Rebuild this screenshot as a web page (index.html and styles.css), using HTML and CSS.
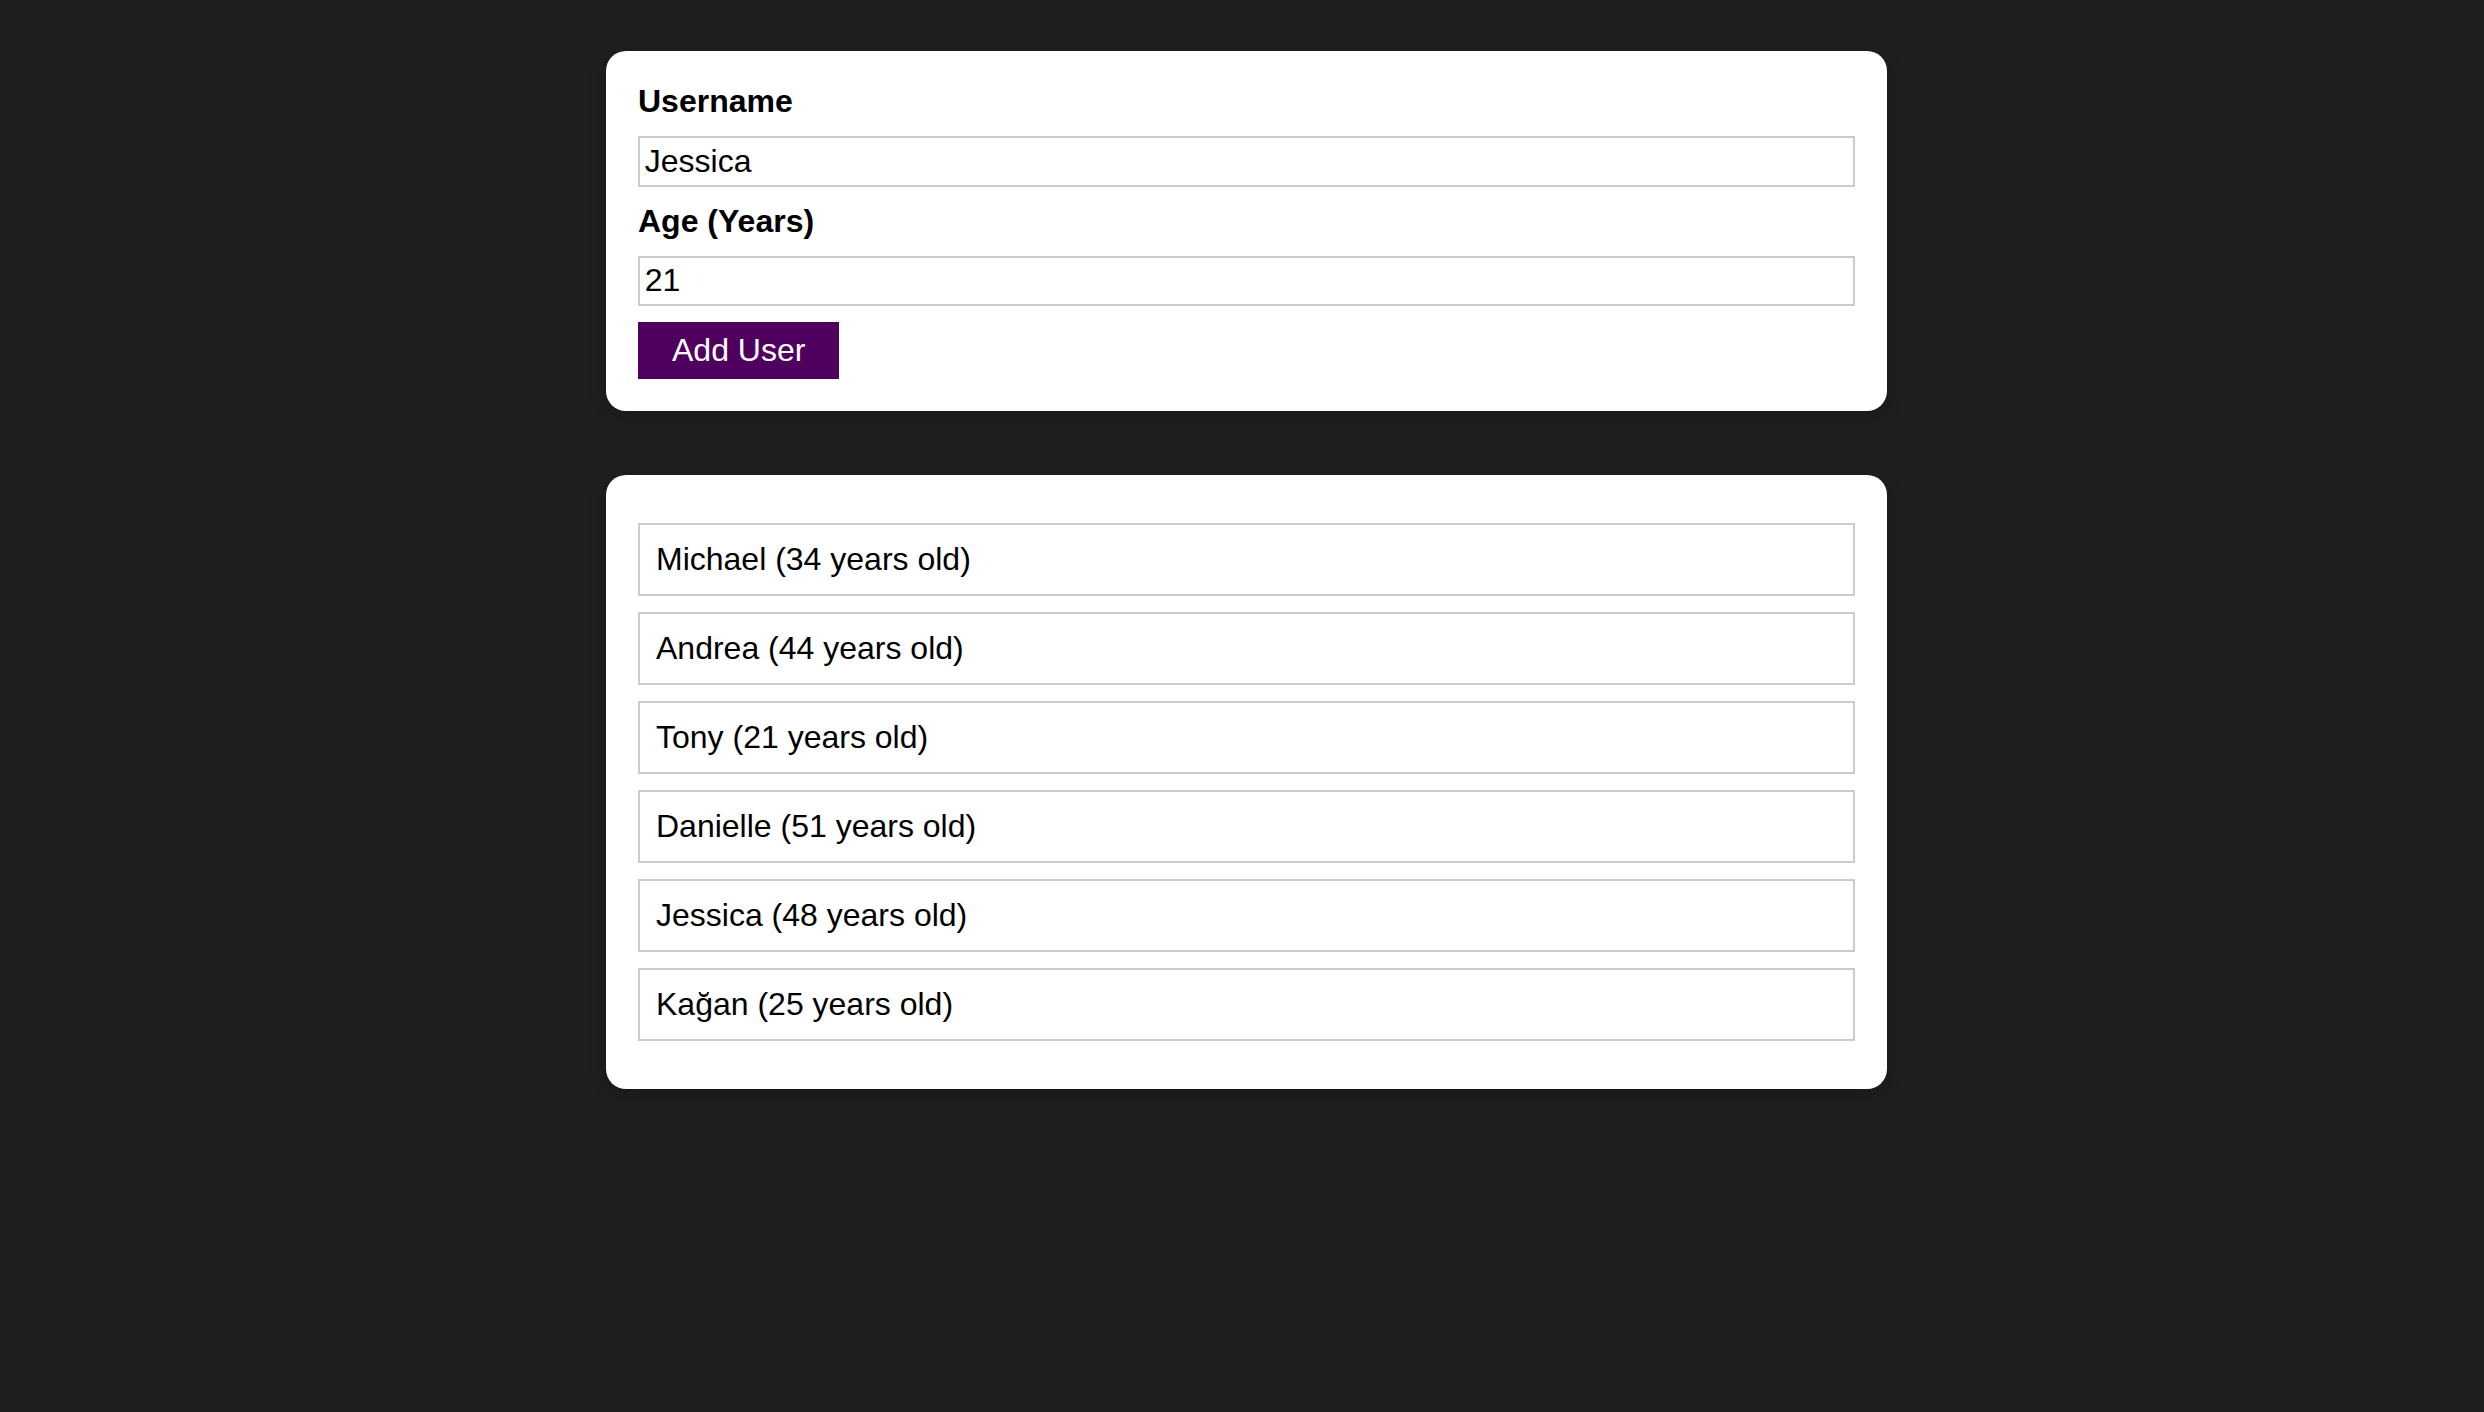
FILE: index.html
```html
<!DOCTYPE html>
<html lang="en">
<head>
<meta charset="utf-8">
<title>Users</title>
<link rel="stylesheet" href="styles.css">
</head>
<body>
<div class="app">
  <div class="card input-card">
    <form class="user-form">
      <label class="field-label" for="username">Username</label>
      <input class="field-input" id="username" type="text" value="Jessica">
      <label class="field-label" for="age">Age (Years)</label>
      <input class="field-input" id="age" type="number" value="21">
      <button class="add-button" type="button">Add User</button>
    </form>
  </div>
  <div class="card users-card">
    <ul class="users-list">
      <li class="user-item">Michael (34 years old)</li>
      <li class="user-item">Andrea (44 years old)</li>
      <li class="user-item">Tony (21 years old)</li>
      <li class="user-item">Danielle (51 years old)</li>
      <li class="user-item">Jessica (48 years old)</li>
      <li class="user-item">Kağan (25 years old)</li>
    </ul>
  </div>
</div>
</body>
</html>
```
FILE: styles.css
```css
* {
  box-sizing: border-box;
}

html, body {
  margin: 0;
  padding: 0;
  background: #1f1f1f;
  font-family: "Liberation Sans", Arial, Helvetica, sans-serif;
  font-size: 32px;
}

.app {
  padding-left: 9px;
  padding-top: 51px;
  padding-bottom: 64px;
}

.card {
  background: #ffffff;
  border-radius: 20px;
  box-shadow: 0 4px 16px rgba(0, 0, 0, 0.26);
  width: 1281px;
  margin: 0 auto;
}

.input-card {
  padding: 32px;
}

.users-card {
  margin-top: 64px;
}

.user-form {
  margin: 0;
}

.field-label {
  display: block;
  font-weight: bold;
  margin-bottom: 16px;
  color: #000;
  line-height: normal;
}

.field-input {
  display: block;
  width: 100%;
  font: inherit;
  color: #000;
  border: 2px solid #ccc;
  padding: 4.8px;
  margin: 0 0 16px 0;
  line-height: normal;
  background: #fff;
  outline: none;
  -moz-appearance: textfield;
  appearance: textfield;
}

.field-input::-webkit-outer-spin-button,
.field-input::-webkit-inner-spin-button {
  -webkit-appearance: none;
  margin: 0;
}

.add-button {
  display: block;
  font: inherit;
  line-height: normal;
  border: 2px solid #4f005f;
  background: #4f005f;
  color: #ffffff;
  padding: 8px 32px;
  margin: 0;
  cursor: pointer;
}

.users-list {
  list-style: none;
  margin: 0;
  padding: 32px;
}

.user-item {
  border: 2px solid #ccc;
  margin: 16px 0;
  padding: 16px;
  line-height: normal;
  color: #000;
}
```
